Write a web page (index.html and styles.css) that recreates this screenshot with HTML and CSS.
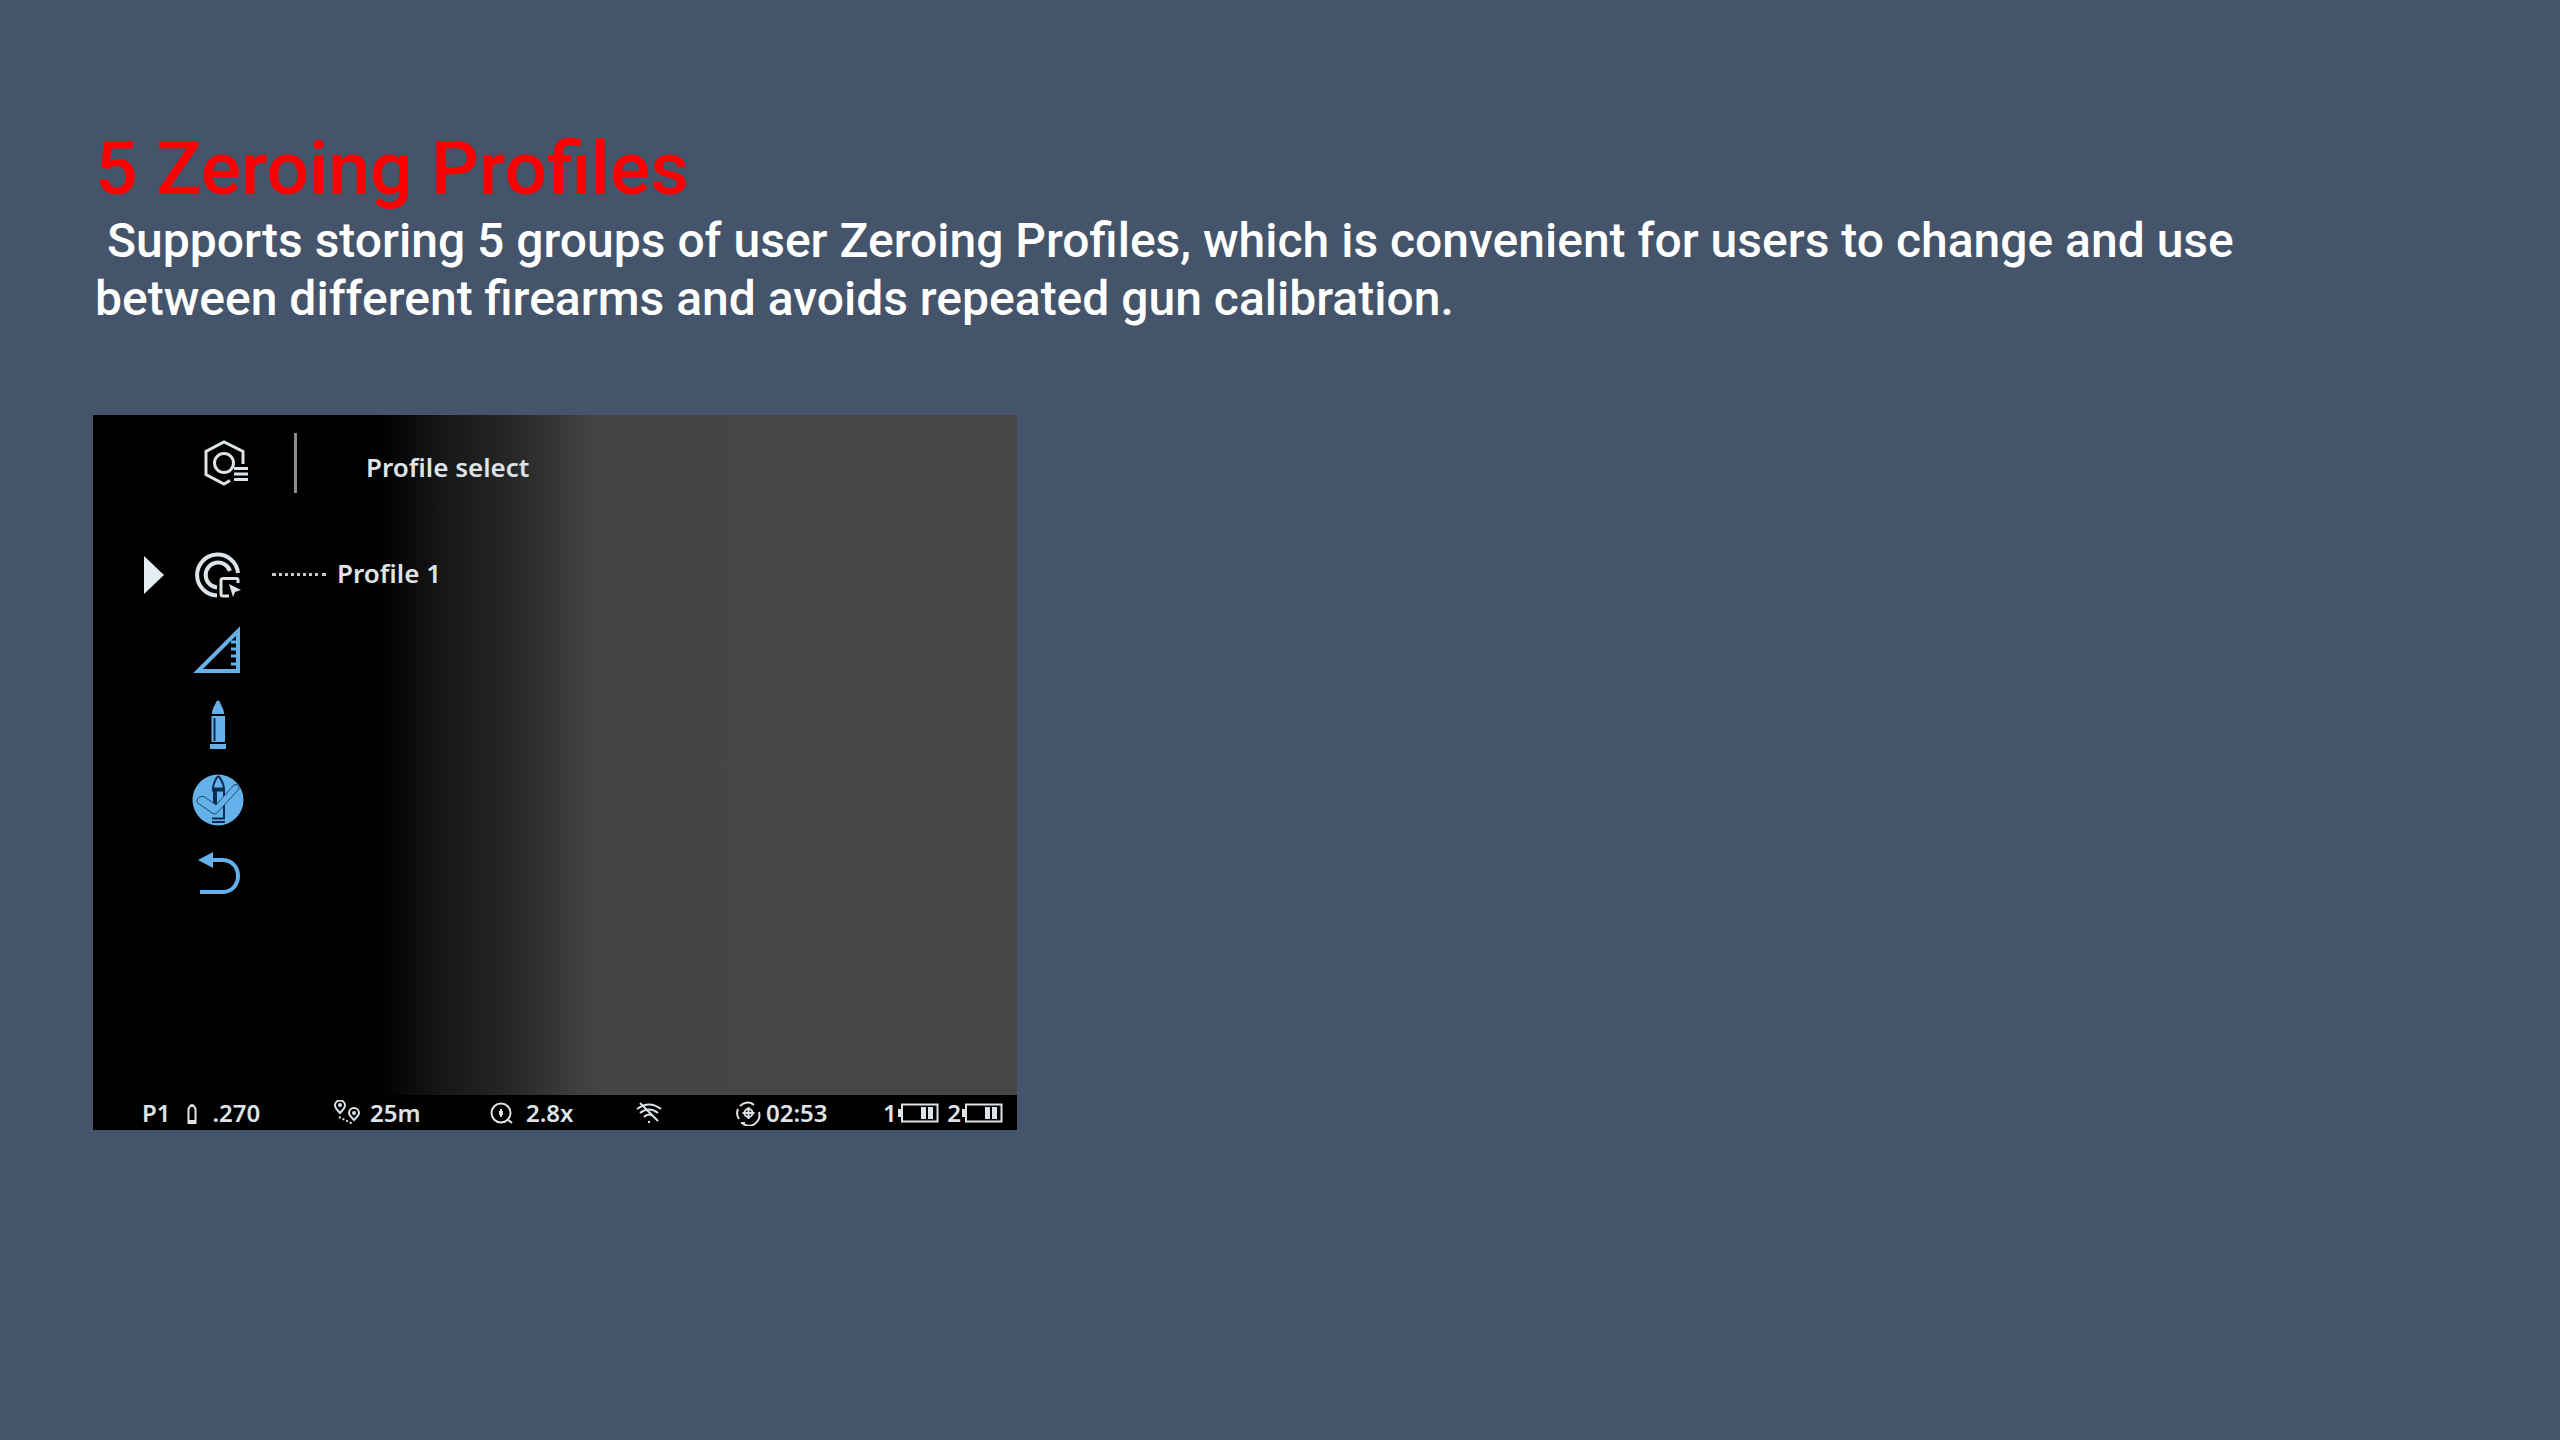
FILE: index.html
```html
<!DOCTYPE html>
<html lang="en">
<head>
<meta charset="utf-8">
<title>5 Zeroing Profiles</title>
<link rel="stylesheet" href="styles.css">
</head>
<body>
<main class="slide">
  <header class="intro">
    <h1 class="title">5 Zeroing Profiles</h1>
    <p class="lead">&nbsp;Supports storing 5 groups of user Zeroing Profiles, which is convenient for users to change and use<br>between different firearms and avoids repeated gun calibration.</p>
  </header>

  <section class="screen" aria-label="Profile select">
    <div class="screen-head">
      <svg class="icon head-icon" viewBox="0 0 52 52" aria-hidden="true">
        <path d="M45 27V14.500L26 5L8 14.500V37.500L26 47L32 43.500" />
        <circle cx="26" cy="26" r="9.500" />
        <path d="M36 31.500H50M36 37H50M36 42.500H50" />
      </svg>
      <span class="divider"></span>
      <h2 class="screen-title">Profile select</h2>
    </div>

    <ul class="menu">
      <li class="row">
        <svg class="pointer" viewBox="0 0 20 38" aria-hidden="true"><path d="M0 0L20 19L0 38Z" /></svg>
        <button class="item" aria-label="Profile">
          <svg class="icon bold" viewBox="0 0 52 52" aria-hidden="true">
            <path d="M46 24A20.500 20.500 0 1 0 25 46.500" />
            <path d="M38 22A12.500 12.500 0 1 0 25 38.500" />
            <path class="thin" d="M46 34V31Q46 29.500 44.500 29.500H31Q29 29.500 29 31.500V45Q29 47 31 47H37" />
            <path class="solid" d="M37 35L49 41L43 43L41 48Z" />
          </svg>
        </button>
        <span class="dots"></span>
        <span class="value">Profile 1</span>
      </li>
      <li class="row">
        <button class="item blue" aria-label="Angle">
          <svg class="icon" viewBox="0 0 52 52" aria-hidden="true">
            <path class="stroke-wide" d="M6 47H46V7Z" />
            <path class="thin" d="M39 18H46M39 25H46M39 32H46M39 40H46" />
          </svg>
        </button>
      </li>
      <li class="row">
        <button class="item blue" aria-label="Ammunition">
          <svg class="icon" viewBox="0 0 52 52" aria-hidden="true">
            <path class="solid" d="M20 15C20 9 23 7 24 3Q26 0 28 3C29 7 32 9 32 15ZM19.500 17H33V43H19.500ZM18 45H34V50H18Z" />
            <path class="ink" d="M22.500 19V42" />
          </svg>
        </button>
      </li>
      <li class="row">
        <button class="item blue" aria-label="Confirm ammunition">
          <svg class="icon" viewBox="0 0 52 52" aria-hidden="true">
            <circle class="solid" cx="26" cy="26" r="25.500" />
            <path class="ink" d="M21 15C21 9 23 7 24.500 4Q26.500 1 28 4C29.500 7 32 9 32 15M32 17V44" />
            <path class="ink wide" d="M20 15.500H33M23 17V34" />
            <path class="ink" d="M20 44.500H33M20 48H33" />
            <path class="check" d="M5 26Q6 22 12 22.500L24 31L42 11Q47 9 47 15L25 39Q23 41 20 39L6 29Q4 28 5 26Z" />
          </svg>
        </button>
      </li>
      <li class="row">
        <button class="item blue" aria-label="Back">
          <svg class="icon" viewBox="0 0 52 52" aria-hidden="true">
            <path class="stroke-wide" d="M18 11H31C51 12 51 42 31 43H8" />
            <path class="solid" d="M6 11L21 3V19Z" />
          </svg>
        </button>
      </li>
    </ul>

    <div class="status">
      <div class="stat loose">
        <span>P1</span>
        <svg class="round" viewBox="0 0 10 24" aria-hidden="true"><path d="M1.500 22V8Q5 0 8.500 8V22Z" /><path d="M1 20H9M3 5H7" /></svg>
        <span>.270</span>
      </div>
      <div class="stat">
        <svg class="glyph" viewBox="0 0 26 26" aria-hidden="true"><path d="M6 13C2 9 1 7 1 5.500A5 5 0 0 1 11 5.500C11 8 9 10 6 13ZM20 20C16 16 15 15 15 13A5 5 0 0 1 25 13C25 15 23 17 20 20Z" /><circle cx="6" cy="5" r="1" /><circle cx="20" cy="13" r="1" /><path class="spots" d="M5 17L19 24" /></svg>
        <span>25m</span>
      </div>
      <div class="stat">
        <svg class="glyph" viewBox="0 0 26 26" aria-hidden="true"><circle cx="11" cy="13" r="9.500" /><path d="M17 19L22 23M11 9V17M10 11V15M12 11V15" /></svg>
        <span>2.8x</span>
      </div>
      <div class="stat">
        <svg class="glyph" viewBox="0 0 26 26" aria-hidden="true"><path d="M1 9Q13 0 25 9M4 13Q13 6 22 13M8 17Q13 12 18 17M12 22H14M4 3L22 21" /></svg>
      </div>
      <div class="stat tight">
        <svg class="glyph" viewBox="0 0 26 26" aria-hidden="true"><path d="M17 4A10.500 10.500 0 0 0 4 6M2 9A10.500 10.500 0 0 0 3 19M6 23A10.500 10.500 0 0 0 23 12" /><circle cx="12.500" cy="13" r="4" /><path d="M12.500 7V19M6.500 13H18.500M15 3L18 5M5 23H9" /></svg>
        <span>02:53</span>
      </div>
      <div class="stat batteries">
        <span class="cell"><span>1</span><svg class="battery" viewBox="0 0 42 20" aria-hidden="true"><path d="M5 1.500H40.500V18.500H5Z" /><path class="solid" d="M1 6H4V14H1ZM24 4H29V16H24ZM31 4H36V16H31Z" /></svg></span>
        <span class="cell"><span>2</span><svg class="battery" viewBox="0 0 42 20" aria-hidden="true"><path d="M5 1.500H40.500V18.500H5Z" /><path class="solid" d="M1 6H4V14H1ZM24 4H29V16H24ZM31 4H36V16H31Z" /></svg></span>
      </div>
    </div>
  </section>
</main>
</body>
</html>
```
FILE: styles.css
```css
* {
  box-sizing: border-box;
  margin: 0;
  padding: 0;
}

body {
  min-height: 100vh;
  background: #44546a;
  color: #fff;
  font-family: Roboto, "Liberation Sans", sans-serif;
}

.slide {
  display: flex;
  flex-direction: column;
  gap: 87px;
  padding: 124px 93px;
}

.intro {
  padding-left: 2px;
}

.title {
  color: #f00;
  font-size: 75px;
  font-weight: 500;
  line-height: 88px;
}

.lead {
  font-size: 48px;
  font-weight: 500;
  line-height: 58px;
}

.screen {
  width: 100%;
  max-width: 924px;
  display: flex;
  flex-direction: column;
  background: linear-gradient(90deg, #000 31%, #171717 38%, #242424 44%, #363636 50%, #454545 55%, #464646);
  color: #dde3e6;
  font-family: "Noto Sans", sans-serif;
  font-size: 24px;
  font-weight: 600;
  line-height: 32px;
}

.screen-head {
  display: flex;
  align-items: center;
  padding: 18px 105px;
}

.icon {
  display: block;
  width: 52px;
  height: 52px;
}

svg {
  flex: none;
  fill: none;
  stroke: currentColor;
  stroke-width: 3;
}

.bold {
  stroke-width: 4;
}

.divider {
  width: 3px;
  height: 60px;
  margin: 0 69px 0 44px;
  background: #8c8c8c;
}

.screen-title {
  padding-top: 8px;
  font-size: 26px;
  font-weight: 600;
  line-height: 32px;
}

.menu {
  padding: 26px 51px 183px;
  list-style: none;
}

.row {
  display: grid;
  grid-template-columns: 20px 52px 54px 1fr;
  column-gap: 28px;
  align-items: center;
  height: 75px;
}

.pointer {
  width: 20px;
  height: 38px;
  fill: #e4eef4;
  stroke: none;
}

.item {
  grid-column: 2;
  border: 0;
  background: none;
  color: inherit;
}

.blue {
  color: #65b1ea;
}

.solid {
  fill: currentColor;
  stroke: none;
}

.thin {
  stroke-width: 3;
}

.stroke-wide {
  stroke-width: 4;
}

.ink {
  stroke: #0b2c4c;
  stroke-width: 2;
}

.wide {
  stroke-width: 4;
}

.check {
  fill: currentColor;
  stroke: #1d4a73;
  stroke-width: 1;
}

.dots {
  border-top: 3px dotted #c8c8c8;
}

.value {
  margin-left: -17px;
  padding-bottom: 4px;
  font-size: 26px;
}

.status {
  display: grid;
  grid-template-columns: 192fr 156fr 146fr 100fr 147fr 120fr;
  align-items: center;
  height: 35px;
  padding: 0 14px 0 49px;
  background: #000;
}

.stat,
.cell {
  display: flex;
  align-items: center;
  white-space: nowrap;
}

.stat {
  gap: 10px;
}

.stat svg {
  stroke-width: 2;
}

.stat.loose {
  gap: 16px;
}

.stat.tight {
  gap: 4px;
}

.stat.batteries {
  justify-content: space-between;
  gap: 0;
}

.round {
  width: 10px;
  height: 24px;
}

.glyph {
  width: 26px;
  height: 26px;
}

.spots {
  stroke-dasharray: 2 2;
}

.battery {
  width: 42px;
  height: 20px;
}
```
